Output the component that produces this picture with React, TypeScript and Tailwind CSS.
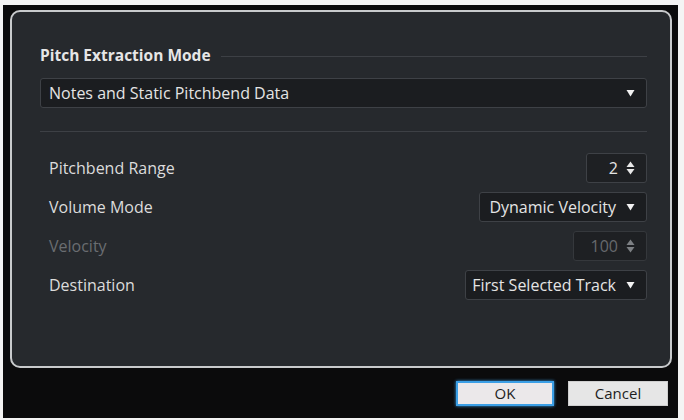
import React from 'react';

const font = { fontFamily: '"Open Sans", "Noto Sans", "Liberation Sans", sans-serif' };

function DownTriangle({ muted = false }: { muted?: boolean }) {
    return (
        <svg width="9" height="8" viewBox="0 0 9 8" className="shrink-0">
            <path d="M0.5 1h8L4.5 7.5z" fill={muted ? '#8a8d91' : '#f2f2f2'} />
        </svg>
    );
}

function SpinArrows({ muted = false }: { muted?: boolean }) {
    const c = muted ? '#7d8084' : '#e8e8e8';
    return (
        <svg width="9" height="14" viewBox="0 0 9 14" className="shrink-0">
            <path d="M4.5 0.5L8.5 6H0.5z" fill={c} />
            <path d="M0.5 8h8L4.5 13.5z" fill={c} />
        </svg>
    );
}

function Select({ value, width }: { value: string; width: string }) {
    return (
        <div
            className={`${width} h-[30px] flex items-center justify-end gap-[10px] pl-3 pr-[11px] bg-[#1b1d20] border border-[#3e4146] rounded-[3px] text-[16px] text-[#e4e4e4]`}
        >
            <span className="whitespace-nowrap">{value}</span>
            <DownTriangle />
        </div>
    );
}

function Spinner({ value, width, disabled = false }: { value: string; width: string; disabled?: boolean }) {
    return (
        <div
            className={`${width} h-[30px] flex items-center justify-end gap-[8px] pr-[11px] bg-[#1e2023] border rounded-[3px] text-[16px] ${
                disabled ? 'border-[#35383c] text-[#66696d]' : 'border-[#3e4146] text-[#e4e4e4]'
            }`}
        >
            <span>{value}</span>
            <SpinArrows muted={disabled} />
        </div>
    );
}

function Row({ label, children, disabled = false }: { label: string; children: React.ReactNode; disabled?: boolean }) {
    return (
        <div className="h-[30px] flex items-center justify-between">
            <span className={`pl-[9px] text-[16px] ${disabled ? 'text-[#6a6d71]' : 'text-[#dcdcdc]'}`}>{label}</span>
            {children}
        </div>
    );
}

export default function App() {
    return (
        <div className="w-[684px] h-[420px] bg-[#f4f4f4] pt-[5px] pl-[3px] pr-[6px] pb-[2px] overflow-hidden" style={font}>
            <div className="h-full bg-[#0b0b0c] pt-[5px] pl-[7px] pr-[4px] flex flex-col">
                {/* Settings panel */}
                <div className="h-[358px] mr-[2px] border-2 border-[#c8cacc] rounded-[10px] bg-[#26292d] pt-[34px] pl-[28px] pr-[23px] flex flex-col">
                    <div className="h-[20px] flex items-center gap-[10px]">
                        <span className="text-[15.5px] font-bold text-[#e6e6e6] whitespace-nowrap">Pitch Extraction Mode</span>
                        <div className="flex-1 h-px bg-[#3d4045]" />
                    </div>

                    <div className="mt-[12px] h-[30px] flex items-center justify-between pl-[8px] pr-[11px] bg-[#1b1d20] border border-[#3e4146] rounded-[3px] text-[16px] text-[#e4e4e4]">
                        <span>Notes and Static Pitchbend Data</span>
                        <DownTriangle />
                    </div>

                    <div className="mt-[23px] h-px bg-[#3d4045]" />

                    <div className="mt-[21px] flex flex-col gap-[9px]">
                        <Row label="Pitchbend Range">
                            <Spinner value="2" width="w-[61px]" />
                        </Row>
                        <Row label="Volume Mode">
                            <Select value="Dynamic Velocity" width="w-[168px]" />
                        </Row>
                        <Row label="Velocity" disabled>
                            <Spinner value="100" width="w-[74px]" disabled />
                        </Row>
                        <Row label="Destination">
                            <Select value="First Selected Track" width="w-[182px]" />
                        </Row>
                    </div>
                </div>

                {/* Dialog buttons */}
                <div className="mt-[13px] flex justify-end gap-[14px] pr-[6px]">
                    <button className="w-[98px] h-[25px] bg-[#ebe8ea] border-2 border-[#3b9fe6] shadow-[0_0_3px_#3b9fe6] text-[15px] text-[#1e1e1e] leading-none">
                        OK
                    </button>
                    <button className="w-[100px] h-[25px] bg-[#e6e6e6] border border-[#cfcfcf] text-[15px] text-[#1e1e1e] leading-none">
                        Cancel
                    </button>
                </div>
            </div>
        </div>
    );
}
